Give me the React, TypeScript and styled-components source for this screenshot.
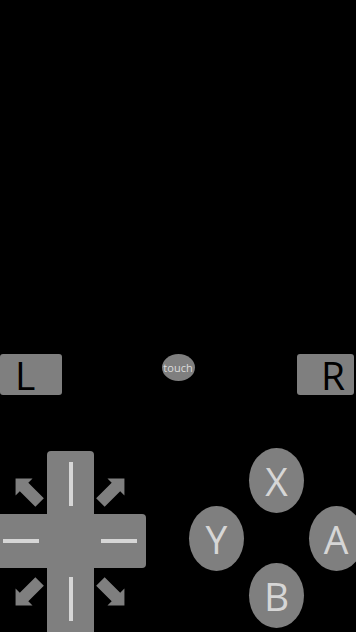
import React from 'react';
import styled, { createGlobalStyle } from 'styled-components';

const GlobalStyle = createGlobalStyle`
  html, body {
    margin: 0;
    padding: 0;
    background: #000;
  }
  body {
    font-family: "Open Sans", "Noto Sans", "DejaVu Sans", sans-serif;
  }
`

const PAD_GREY = '#7f7f7f';
const LIGHT = '#d6d6d6';

const Screen = styled.div`
  width: 356px;
  height: 632px;
  overflow: hidden;
  display: flex;
  flex-direction: column;
  background: #000;
`

const GameArea = styled.div`
  height: 354px;
  flex-shrink: 0;
`

const ShoulderRow = styled.div`
  display: grid;
  grid-template-columns: 1fr auto 1fr;
  align-items: start;
  height: 42px;
`

const Shoulder = styled.div<{ $side: 'left' | 'right' }>`
  justify-self: ${p => (p.$side === 'left' ? 'start' : 'end')};
  margin-right: ${p => (p.$side === 'right' ? '2px' : '0')};
  width: ${p => (p.$side === 'left' ? '62px' : '57px')};
  height: 41px;
  box-sizing: border-box;
  border-radius: 3px;
  background: ${PAD_GREY};
  color: #000;
  font-size: 39px;
  line-height: 1;
  display: flex;
  align-items: center;
  justify-content: ${p => (p.$side === 'left' ? 'flex-start' : 'flex-end')};
  padding: ${p => (p.$side === 'left' ? '0 0 0 15px' : '0 9px 0 0')};
`

const TouchButton = styled.div`
  width: 33px;
  height: 27px;
  border-radius: 50%;
  background: ${PAD_GREY};
  color: #dcdcdc;
  font-size: 11px;
  display: flex;
  align-items: center;
  justify-content: center;
`

const Controls = styled.div`
  display: flex;
  align-items: flex-start;
  margin-top: 56px;
`

const DPad = styled.div`
  display: grid;
  grid-template-columns: 47px 47px 52px;
  grid-template-rows: 63px 54px 70px;
  flex-shrink: 0;
`

type Dir = 'up' | 'down' | 'left' | 'right';

const Arm = styled.div<{ $dir: Dir }>`
  background: ${PAD_GREY};
  display: flex;
  justify-content: center;
  align-items: center;
  border-radius: ${p =>
    p.$dir === 'up' ? '4px 4px 0 0' :
    p.$dir === 'right' ? '0 4px 4px 0' :
    p.$dir === 'down' ? '0 0 4px 4px' : '0'};
  ${p => p.$dir === 'up' && 'align-items: flex-start; padding-top: 11px;'}
  ${p => p.$dir === 'down' && 'align-items: flex-start; padding-top: 9px;'}
  ${p => p.$dir === 'left' && 'justify-content: flex-end; padding-right: 8px;'}
  ${p => p.$dir === 'right' && 'justify-content: flex-start; padding-left: 7px;'}
`

const ArmLine = styled.div<{ $vertical: boolean }>`
  background: ${LIGHT};
  width: ${p => (p.$vertical ? '4px' : '36px')};
  height: ${p => (p.$vertical ? '44px' : '4px')};
`

const PadCenter = styled.div`
  background: ${PAD_GREY};
`

const Corner = styled.div<{ $top: boolean; $left: boolean }>`
  display: flex;
  justify-content: ${p => (p.$left ? 'flex-end' : 'flex-start')};
  align-items: ${p => (p.$top ? 'flex-end' : 'flex-start')};
  padding: ${p => (p.$top ? '0 0 5px 0' : '7px 0 0 0')};
  padding-right: ${p => (p.$left ? '1px' : '0')};
`

const FaceGrid = styled.div`
  display: grid;
  grid-template-columns: 60px 60px 59px;
  grid-template-rows: 59px 57px 57px;
  align-items: center;
  justify-items: center;
  margin-left: 40.5px;
`

const FaceButton = styled.div<{ $col: number; $row: number }>`
  grid-column: ${p => p.$col};
  grid-row: ${p => p.$row};
  width: 55px;
  height: 65px;
  border-radius: 50%;
  background: ${PAD_GREY};
  color: ${LIGHT};
  font-size: 39px;
  line-height: 1;
  display: flex;
  align-items: center;
  justify-content: center;
`

function Arrow({ angle }: { angle: number }) {
  return (
    <svg width="34" height="34" viewBox="-17 -17 34 34">
      <g transform={`rotate(${angle})`}>
        <polygon
          points="0,-19 12,-7 6,-7 6,15 -6,15 -6,-7 -12,-7"
          fill={PAD_GREY}
        />
      </g>
    </svg>
  );
}

export default function App() {
  return (
    <Screen>
      <GlobalStyle />
      <GameArea />
      <ShoulderRow>
        <Shoulder $side="left">L</Shoulder>
        <TouchButton>touch</TouchButton>
        <Shoulder $side="right">R</Shoulder>
      </ShoulderRow>
      <Controls>
        <DPad>
          <Corner $top $left><Arrow angle={-45} /></Corner>
          <Arm $dir="up"><ArmLine $vertical /></Arm>
          <Corner $top $left={false}><Arrow angle={45} /></Corner>
          <Arm $dir="left"><ArmLine $vertical={false} /></Arm>
          <PadCenter />
          <Arm $dir="right"><ArmLine $vertical={false} /></Arm>
          <Corner $top={false} $left><Arrow angle={-135} /></Corner>
          <Arm $dir="down"><ArmLine $vertical /></Arm>
          <Corner $top={false} $left={false}><Arrow angle={135} /></Corner>
        </DPad>
        <FaceGrid>
          <FaceButton $col={2} $row={1}>X</FaceButton>
          <FaceButton $col={1} $row={2}>Y</FaceButton>
          <FaceButton $col={3} $row={2}>A</FaceButton>
          <FaceButton $col={2} $row={3}>B</FaceButton>
        </FaceGrid>
      </Controls>
    </Screen>
  );
}
